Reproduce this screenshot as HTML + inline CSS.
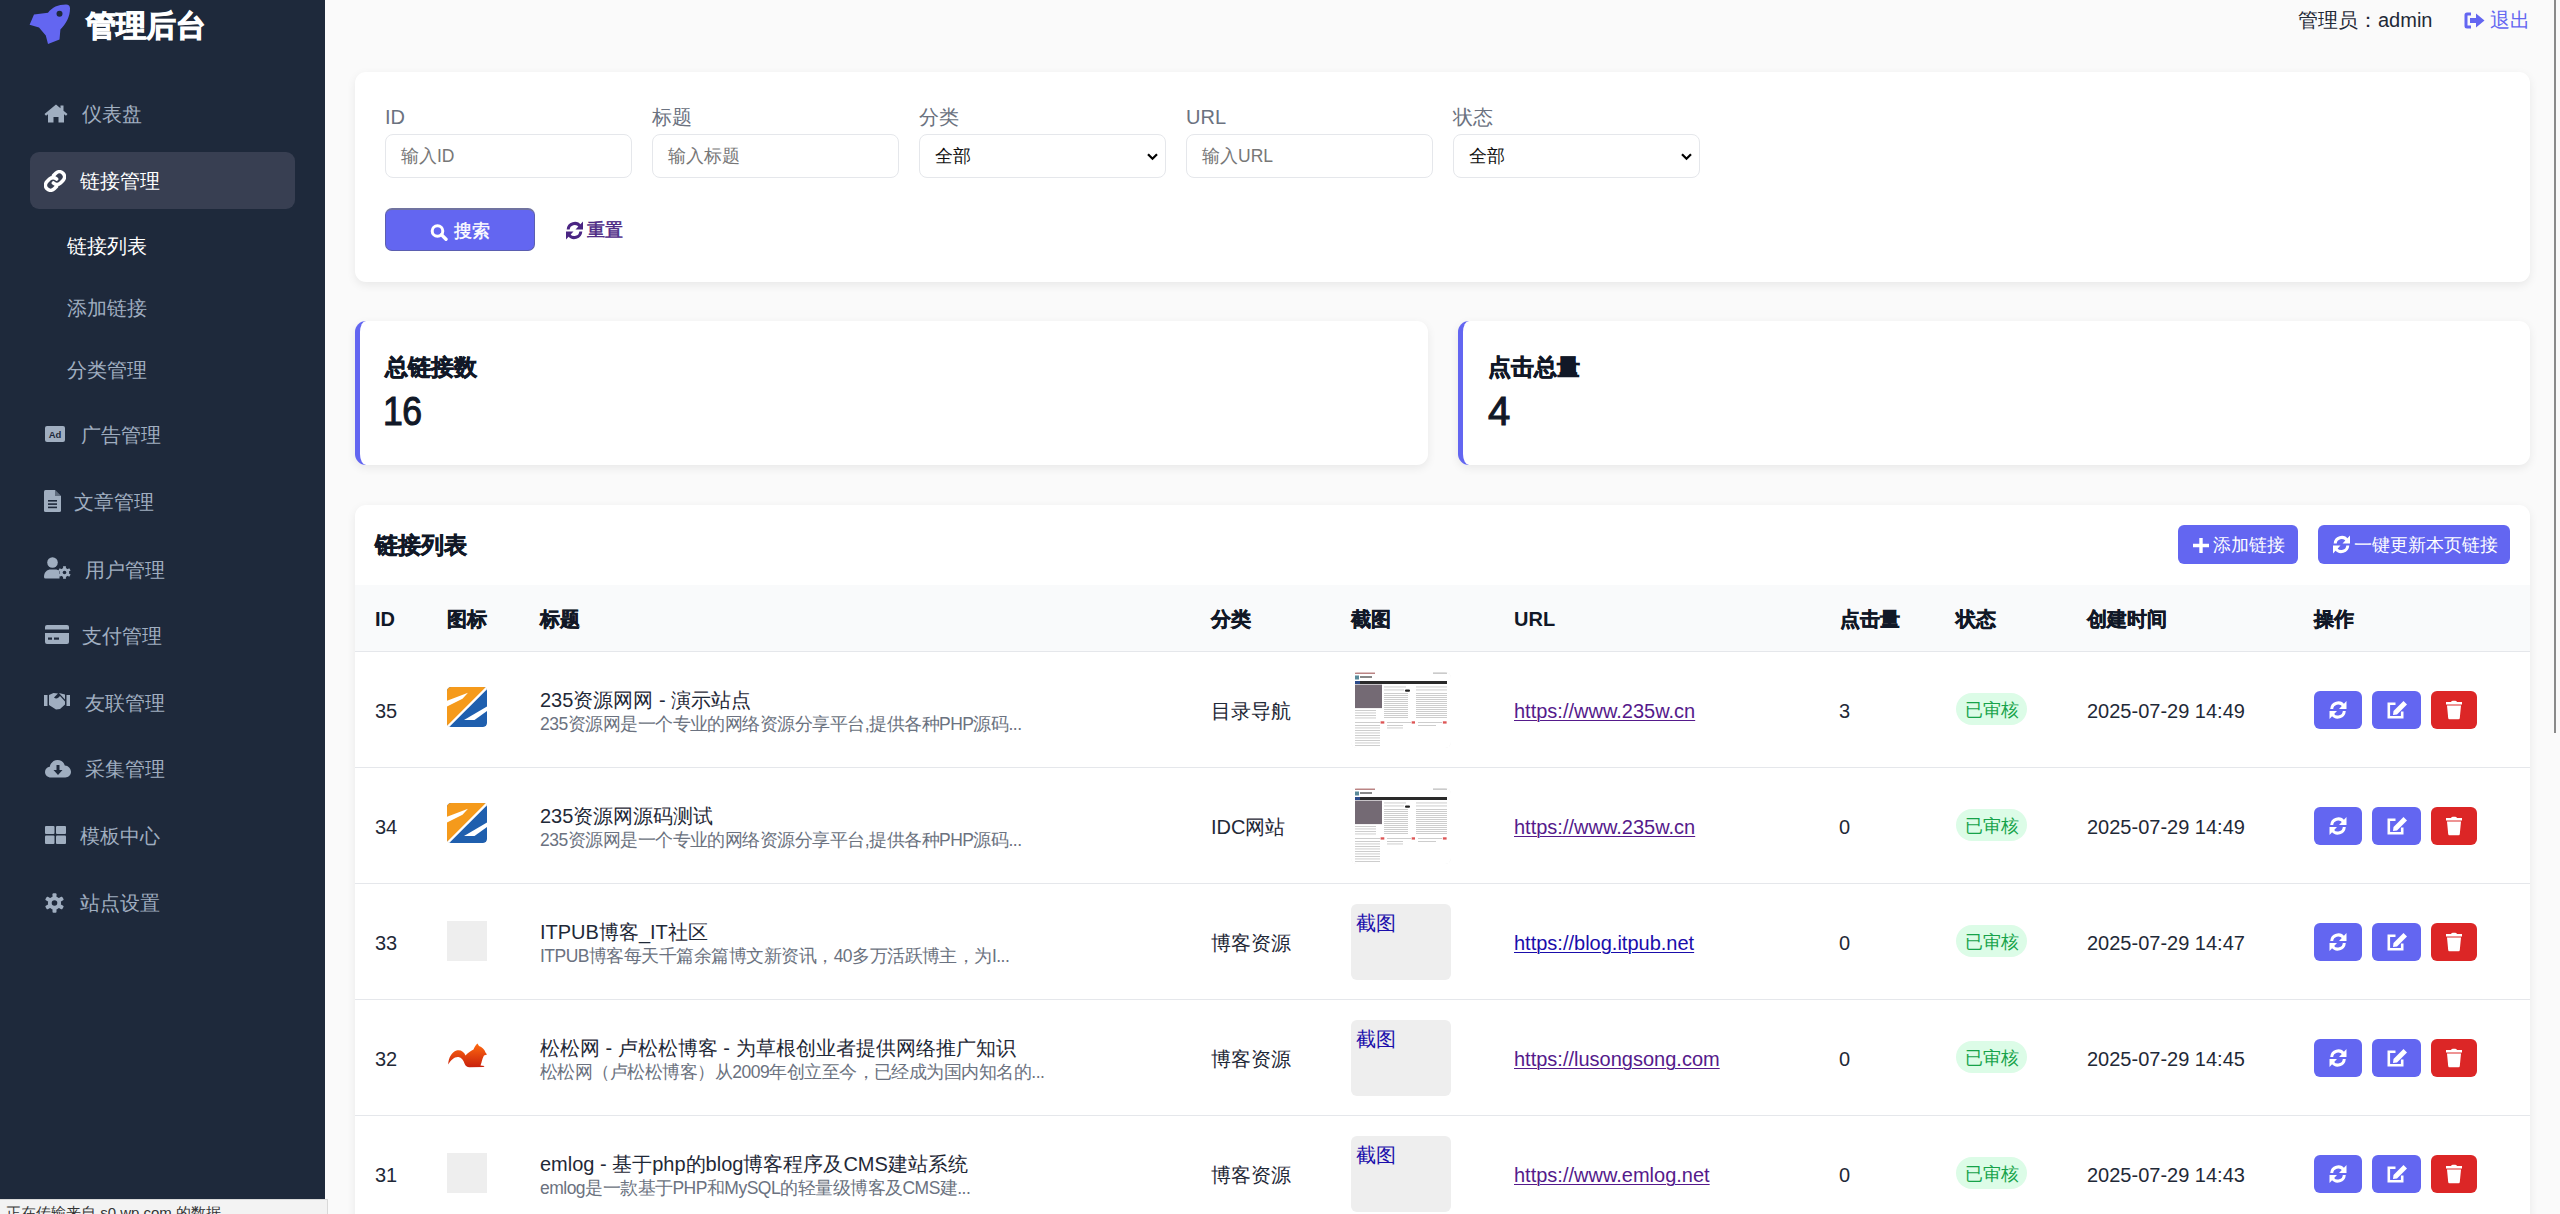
<!DOCTYPE html>
<html><head><meta charset="utf-8">
<style>
*{box-sizing:border-box;margin:0;padding:0}
html,body{width:2560px;height:1214px;overflow:hidden}
body{font-family:"Liberation Sans",sans-serif;background:#fafafa;color:#1f2937;position:relative}
.abs{position:absolute;white-space:nowrap}
svg{position:absolute;display:block}
#side{position:absolute;left:0;top:0;width:325px;height:1214px;background:#1e293b}
.logo{left:86px;top:8px;font-size:30px;font-weight:bold;color:#fff;line-height:36px;-webkit-text-stroke:1px #fff}
.navbg{left:30px;top:152px;width:265px;height:57px;border-radius:9px;background:#383f52}
.nt{font-size:20px;color:#a0aec0;line-height:24px}
.nt.on{color:#fff}
.card{position:absolute;background:#fff;border-radius:11px;box-shadow:0 3px 10px rgba(0,0,0,.075)}
.lbl{font-size:20px;color:#6b7280;line-height:24px;top:-1px}
.inp{position:absolute;top:62px;width:247px;height:44px;border:1px solid #e5e7eb;border-radius:8px;background:#fff}
.ph{position:absolute;left:15px;top:9px;font-size:17.5px;line-height:24px;color:#777;white-space:nowrap}
.sel .ph{color:#111}
.btn{position:absolute;background:#6366f1;border-radius:7px}
.bt{position:absolute;font-size:17.5px;line-height:22px;color:#fff;white-space:nowrap}
.stat-t{font-size:22.5px;font-weight:bold;color:#111827;line-height:28px;-webkit-text-stroke:0.6px #111827}
.stat-n{font-size:40px;font-weight:normal;color:#111827;line-height:48px;-webkit-text-stroke:1.1px #111827;letter-spacing:-0.5px;transform:scaleX(0.89);transform-origin:0 0}
.th{position:absolute;top:22px;font-size:20px;font-weight:bold;color:#111827;line-height:24px;white-space:nowrap;-webkit-text-stroke:0.5px #111827}
.row{position:absolute;left:0;width:2175px;height:116px;border-top:1px solid #e5e7eb}
.td{position:absolute;font-size:20px;line-height:24px;color:#1f2937;white-space:nowrap}
.ds{position:absolute;font-size:17.5px;line-height:22px;color:#6b7280;white-space:nowrap;letter-spacing:-0.52px}
.fav{position:absolute;left:92px;top:35px;width:40px;height:40px;border-radius:4px;background:#eee;overflow:hidden}
.shot{position:absolute;left:996px;top:20px;width:100px;height:76px;border-radius:6px;background:#eee;overflow:hidden}
.shot span{position:absolute;left:5px;top:7px;font-size:20px;line-height:24px;color:#1a0dab}
.url{position:absolute;left:1159px;top:47px;font-size:20px;line-height:24px;color:#551a8b;text-decoration:underline;text-decoration-thickness:1.3px;text-underline-offset:2px;white-space:nowrap}
.badge{position:absolute;left:1601px;top:41px;width:71px;height:32px;border-radius:16px;background:#dcfce7;color:#16a34a;font-size:17.5px;line-height:34px;text-align:center;text-indent:1px}
.ab{position:absolute;top:39px;height:38px;border-radius:6px;background:#6366f1}
.ab svg{left:50%;top:50%;transform:translate(-50%,-50%)}
</style></head><body>
<div id="side">
  <svg style="left:24px;top:0px" width="54" height="52" viewBox="0 0 54 52"><path fill="#6366f1" d="M10,14.5 L24,12.8 C28,7.5 34,4.6 42,4.6 Q46,4.6 46,8.6 C46,17 42,24 36.4,29.5 L35.5,39.4 L24,44.1 L21.8,35.5 L15,27.4 L5.6,24.8 Z"/><circle cx="35.5" cy="13.8" r="3" fill="#1e293b"/></svg>
  <div class="abs logo">管理后台</div>
  <div class="abs navbg"></div>
  <!-- home -->
  <svg style="left:44px;top:104px" width="24" height="19" viewBox="0 0 24 19"><path fill="#a0aec0" d="M12,0.5 L0.5,10 L2,11.8 L4,10.2 L4,18.5 L9.5,18.5 L9.5,13 L14.5,13 L14.5,18.5 L20,18.5 L20,10.2 L22,11.8 L23.5,10 L19.5,6.7 L19.5,1.5 L16.5,1.5 L16.5,4.2 Z"/></svg>
  <div class="abs nt" style="left:82px;top:102px">仪表盘</div>
  <!-- link -->
  <svg style="left:44px;top:170px" width="22" height="22" viewBox="0 0 22 22"><g fill="none" stroke="#fff" stroke-width="3.6" stroke-linecap="round"><path d="M9.5,5.5 L11.8,3.2 C13.8,1.2 17,1.2 19,3.2 C21,5.2 21,8.4 19,10.4 L16.5,12.9 C14.5,14.9 11.4,14.9 9.4,12.9"/><path d="M12.5,16.5 L10.2,18.8 C8.2,20.8 5,20.8 3,18.8 C1,16.8 1,13.6 3,11.6 L5.5,9.1 C7.5,7.1 10.6,7.1 12.6,9.1"/></g></svg>
  <div class="abs nt on" style="left:80px;top:169px">链接管理</div>
  <div class="abs nt on" style="left:67px;top:234px">链接列表</div>
  <div class="abs nt" style="left:67px;top:296px">添加链接</div>
  <div class="abs nt" style="left:67px;top:358px">分类管理</div>
  <!-- ad -->
  <svg style="left:45px;top:426px" width="20" height="16" viewBox="0 0 20 16"><rect x="0" y="0" width="20" height="16" rx="2" fill="#a0aec0"/><text x="10" y="12" font-size="9.5" font-weight="bold" text-anchor="middle" fill="#1e293b" font-family="Liberation Sans">Ad</text></svg>
  <div class="abs nt" style="left:81px;top:423px">广告管理</div>
  <!-- file -->
  <svg style="left:44px;top:490px" width="17" height="22" viewBox="0 0 17 22"><path fill="#a0aec0" d="M0,1.5 Q0,0 1.5,0 L11,0 L17,6 L17,20.5 Q17,22 15.5,22 L1.5,22 Q0,22 0,20.5 Z"/><path fill="#1e293b" d="M11,0 L11,6 L17,6 Z" opacity=".5"/><rect x="4" y="10" width="9" height="1.6" fill="#1e293b"/><rect x="4" y="13.3" width="9" height="1.6" fill="#1e293b"/><rect x="4" y="16.6" width="9" height="1.6" fill="#1e293b"/></svg>
  <div class="abs nt" style="left:74px;top:490px">文章管理</div>
  <!-- user cog -->
  <svg style="left:44px;top:557px" width="27" height="22" viewBox="0 0 27 22"><circle cx="8.5" cy="5.5" r="5.3" fill="#a0aec0"/><path fill="#a0aec0" d="M0,20 C0,15 3,12.5 7,12.5 L11,12.5 C13,12.5 14.5,13 15.5,14 L15.5,21.5 L1.5,21.5 Q0,21.5 0,20 Z"/><g transform="translate(20.5,15.5)"><circle r="4.6" fill="#a0aec0"/><g fill="#a0aec0"><rect x="-1.4" y="-6.3" width="2.8" height="12.6"/><rect x="-1.4" y="-6.3" width="2.8" height="12.6" transform="rotate(60)"/><rect x="-1.4" y="-6.3" width="2.8" height="12.6" transform="rotate(120)"/></g><circle r="1.8" fill="#1e293b"/></g></svg>
  <div class="abs nt" style="left:85px;top:558px">用户管理</div>
  <!-- credit card -->
  <svg style="left:45px;top:625px" width="24" height="19" viewBox="0 0 24 19"><path fill="#a0aec0" d="M0,2 Q0,0 2,0 L22,0 Q24,0 24,2 L24,4.5 L0,4.5 Z M0,8 L24,8 L24,17 Q24,19 22,19 L2,19 Q0,19 0,17 Z"/><rect x="3" y="12.5" width="4" height="2.2" fill="#1e293b"/><rect x="9" y="12.5" width="5" height="2.2" fill="#1e293b"/></svg>
  <div class="abs nt" style="left:82px;top:624px">支付管理</div>
  <!-- handshake -->
  <svg style="left:44px;top:692px" width="26" height="18" viewBox="0 0 26 18"><rect x="0" y="3" width="3.5" height="11" fill="#a0aec0"/><rect x="22.5" y="3" width="3.5" height="11" fill="#a0aec0"/><path fill="#a0aec0" d="M5,3 L9.5,1 L14,1.5 L10,5.5 Q12,7.5 14.5,5.5 L16,4 L21,9.5 L21,12.5 L16,17 L12,17.5 L5,13 Z"/><path fill="#a0aec0" d="M15,1 L21,2.5 L21,7.5 L17,3.2 Z"/></svg>
  <div class="abs nt" style="left:85px;top:691px">友联管理</div>
  <!-- cloud download -->
  <svg style="left:45px;top:760px" width="26" height="18" viewBox="0 0 26 18"><path fill="#a0aec0" d="M6,17.5 C2.5,17.5 0,15 0,12 C0,9.2 2,7 4.8,6.7 C5.5,3 8.6,0 12.5,0 C16,0 18.8,2.3 19.8,5.4 C23.2,5.6 26,8.4 26,11.8 C26,14.9 23.5,17.5 20.3,17.5 Z"/><path fill="#1e293b" d="M11.5,5 L14.5,5 L14.5,10 L17.5,10 L13,15 L8.5,10 L11.5,10 Z"/></svg>
  <div class="abs nt" style="left:85px;top:757px">采集管理</div>
  <!-- th-large -->
  <svg style="left:45px;top:826px" width="21" height="18" viewBox="0 0 21 18"><g fill="#a0aec0"><rect x="0" y="0" width="9.5" height="8" rx="1"/><rect x="11" y="0" width="10" height="8" rx="1"/><rect x="0" y="9.5" width="9.5" height="8.5" rx="1"/><rect x="11" y="9.5" width="10" height="8.5" rx="1"/></g></svg>
  <div class="abs nt" style="left:80px;top:824px">模板中心</div>
  <!-- cog -->
  <svg style="left:45px;top:893px" width="19" height="20" viewBox="-9.5 -10 19 20"><g fill="#a0aec0"><circle r="6.6"/><g><rect x="-2" y="-9.8" width="4" height="19.6" rx="1"/><rect x="-2" y="-9.8" width="4" height="19.6" rx="1" transform="rotate(60)"/><rect x="-2" y="-9.8" width="4" height="19.6" rx="1" transform="rotate(120)"/></g></g><circle r="2.8" fill="#1e293b"/></svg>
  <div class="abs nt" style="left:80px;top:891px">站点设置</div>
</div>

<!-- header -->
<div class="abs" style="left:2298px;top:8px;font-size:20px;line-height:24px;color:#1f2937">管理员：admin</div>
<svg style="left:2464px;top:12px" width="21" height="17" viewBox="0 0 21 17"><path fill="#6366f1" d="M7,0.5 L3,0.5 Q0.5,0.5 0.5,3 L0.5,14 Q0.5,16.5 3,16.5 L7,16.5 L7,13.5 L3.5,13.5 L3.5,3.5 L7,3.5 Z M12,1.5 L20.5,8.5 L12,15.5 L12,11 L6,11 L6,6 L12,6 Z"/></svg>
<div class="abs" style="left:2490px;top:8px;font-size:20px;line-height:24px;color:#6366f1">退出</div>

<div class="card" style="left:355px;top:72px;width:2175px;height:210px">
  <div class="abs lbl" style="left:30px;top:33px">ID</div>
  <div class="abs lbl" style="left:297px;top:33px">标题</div>
  <div class="abs lbl" style="left:564px;top:33px">分类</div>
  <div class="abs lbl" style="left:831px;top:33px">URL</div>
  <div class="abs lbl" style="left:1098px;top:33px">状态</div>
  <div class="inp" style="left:30px"><span class="ph">输入ID</span></div>
  <div class="inp" style="left:297px"><span class="ph">输入标题</span></div>
  <div class="inp sel" style="left:564px"><span class="ph">全部</span><svg style="left:227px;top:18px" width="11" height="8" viewBox="0 0 11 8"><path d="M1,1.2 L5.5,5.8 L10,1.2" fill="none" stroke="#000" stroke-width="2.2"/></svg></div>
  <div class="inp" style="left:831px"><span class="ph">输入URL</span></div>
  <div class="inp sel" style="left:1098px"><span class="ph">全部</span><svg style="left:227px;top:18px" width="11" height="8" viewBox="0 0 11 8"><path d="M1,1.2 L5.5,5.8 L10,1.2" fill="none" stroke="#000" stroke-width="2.2"/></svg></div>
  <div class="btn" style="left:30px;top:136px;width:150px;height:43px;border:1px solid #5b5eb0;border-top:2px solid #7073a0">
    <svg style="left:44px;top:14px" width="20" height="17" viewBox="0 0 20 17"><circle cx="7.5" cy="7" r="5.3" fill="none" stroke="#fff" stroke-width="3"/><path d="M11.5,10.8 L16,15.2" stroke="#fff" stroke-width="3.4" stroke-linecap="round"/></svg>
    <span class="bt" style="left:68px;top:10px;-webkit-text-stroke:0.4px #fff">搜索</span>
  </div>
  <svg style="left:210px;top:149px" width="19" height="19" viewBox="0 0 19 19"><g fill="none" stroke="#4a2583" stroke-width="3"><path d="M3.2,8.5 A6.5,6.5 0 0 1 15,5.2"/><path d="M15.8,10.5 A6.5,6.5 0 0 1 4,13.8"/></g><path fill="#4a2583" d="M18,0.5 L18,8.5 L10.5,8.5 Z M1,18.5 L1,10.5 L8.5,10.5 Z"/></svg>
  <span class="abs" style="left:232px;top:147px;font-size:17.5px;line-height:22px;color:#4a2583;-webkit-text-stroke:0.5px #4a2583">重置</span>
</div>

<div class="card" style="left:355px;top:321px;width:1073px;height:144px;border-left:5px solid #6366f1">
  <div class="abs stat-t" style="left:25px;top:33px">总链接数</div>
  <div class="abs stat-n" style="left:23px;top:66px">16</div>
</div>
<div class="card" style="left:1458px;top:321px;width:1072px;height:144px;border-left:5px solid #6366f1">
  <div class="abs stat-t" style="left:25px;top:33px">点击总量</div>
  <div class="abs stat-n" style="left:25px;top:66px;transform:none">4</div>
</div>

<div class="card" style="left:355px;top:505px;width:2175px;height:760px;overflow:hidden">
<div class="abs" style="left:20px;top:27px;font-size:22.5px;font-weight:bold;color:#111827;line-height:28px;-webkit-text-stroke:0.6px #111827">链接列表</div>
<div class="btn" style="left:1823px;top:20px;width:120px;height:39px;border-radius:6px"><svg style="left:15px;top:13px" width="16" height="15" viewBox="0 0 16 15"><path fill="#fff" d="M6.3,0 L9.7,0 L9.7,5.8 L16,5.8 L16,9.2 L9.7,9.2 L9.7,15 L6.3,15 L6.3,9.2 L0,9.2 L0,5.8 L6.3,5.8 Z"/></svg><span class="bt" style="left:35px;top:9px">添加链接</span></div>
<div class="btn" style="left:1963px;top:20px;width:192px;height:39px;border-radius:6px"><svg style="left:14px;top:10px" width="19" height="19" viewBox="0 0 19 19"><g fill="none" stroke="#fff" stroke-width="3"><path d="M3.2,8.5 A6.5,6.5 0 0 1 15,5.2"/><path d="M15.8,10.5 A6.5,6.5 0 0 1 4,13.8"/></g><path fill="#fff" d="M18,0.5 L18,8.5 L10.5,8.5 Z M1,18.5 L1,10.5 L8.5,10.5 Z"/></svg><span class="bt" style="left:36px;top:9px">一键更新本页链接</span></div>
<div style="position:absolute;left:0;top:80px;width:2175px;height:66px;background:#f9fafb">
<div class="th" style="left:20px;-webkit-text-stroke:0">ID</div><div class="th" style="left:92px">图标</div><div class="th" style="left:185px">标题</div><div class="th" style="left:856px">分类</div><div class="th" style="left:996px">截图</div><div class="th" style="left:1159px;-webkit-text-stroke:0">URL</div><div class="th" style="left:1485px">点击量</div><div class="th" style="left:1601px">状态</div><div class="th" style="left:1732px">创建时间</div><div class="th" style="left:1959px">操作</div>
</div>
<div class="row" style="top:146px">
<div class="td" style="left:20px;top:47px">35</div>
<div class="fav" style="background:none"><svg width="40" height="40" viewBox="0 0 40 40" style="left:0;top:0"><rect width="40" height="40" rx="4" fill="#1f5fae"/><path d="M4,0 L40,0 L0,40 L0,4 Q0,0 4,0 Z" fill="#f59a1b"/><path d="M1,39.5 L39.5,1" stroke="#fff" stroke-width="2.4"/><path d="M0,13.8 L21,5.8 L15.5,11.8 L0,19.5 Z" fill="#fff"/><path d="M17,33 L40,19.5 L40,24 L27.5,33 Z" fill="#fff"/></svg></div>
<div class="td" style="left:185px;top:36px">235资源网网 - 演示站点</div>
<div class="ds" style="left:185px;top:61px">235资源网是一个专业的网络资源分享平台,提供各种PHP源码...</div>
<div class="td" style="left:856px;top:47px">目录导航</div>
<div class="shot"><svg width="100" height="76" viewBox="0 0 100 76" style="left:0;top:0"><rect width="100" height="76" fill="#fff"/><rect x="4" y="0.6" width="20" height="1.2" fill="#a66"/><rect x="82" y="0.6" width="14" height="1" fill="#aaa"/><rect x="4" y="3.5" width="4" height="4" fill="#5a8a9a"/><rect x="9" y="4" width="12" height="2" fill="#888"/><rect x="4" y="9" width="92" height="3" fill="#2a2a2a"/><rect x="4" y="9" width="5" height="3" fill="#2b4a8a"/><rect x="4" y="12.6" width="27" height="23.5" fill="#746a74"/><g fill="#c8c8c8"><rect x="33" y="14.5" width="22" height="0.9"/><rect x="33" y="17.5" width="20" height="0.9"/><rect x="33" y="21" width="24" height="0.9"/><rect x="33" y="23" width="24" height="0.9"/><rect x="33" y="25" width="24" height="0.9"/><rect x="33" y="27" width="24" height="0.9"/><rect x="33" y="29" width="24" height="0.9"/><rect x="33" y="31" width="24" height="0.9"/><rect x="33" y="33" width="24" height="0.9"/><rect x="33" y="35" width="24" height="0.9"/><rect x="33" y="37" width="24" height="0.9"/><rect x="33" y="39" width="24" height="0.9"/><rect x="33" y="41" width="24" height="0.9"/><rect x="33" y="43" width="24" height="0.9"/><rect x="33" y="45" width="24" height="0.9"/><rect x="65" y="14.5" width="31" height="0.9"/><rect x="65" y="17.5" width="31" height="0.9"/><rect x="65" y="21" width="31" height="0.9"/><rect x="65" y="23" width="31" height="0.9"/><rect x="65" y="25" width="31" height="0.9"/><rect x="65" y="27" width="31" height="0.9"/><rect x="65" y="29" width="31" height="0.9"/><rect x="65" y="31" width="31" height="0.9"/><rect x="65" y="33" width="31" height="0.9"/><rect x="65" y="35" width="31" height="0.9"/><rect x="65" y="37" width="31" height="0.9"/><rect x="65" y="39" width="31" height="0.9"/><rect x="65" y="41" width="31" height="0.9"/><rect x="65" y="43" width="31" height="0.9"/><rect x="65" y="45" width="31" height="0.9"/><rect x="4" y="38" width="21" height="0.9"/><rect x="4" y="40.5" width="21" height="0.9"/><rect x="4" y="43" width="21" height="0.9"/><rect x="4" y="45.5" width="21" height="0.9"/><rect x="4" y="50" width="25" height="0.9"/><rect x="36" y="50" width="24" height="0.9"/><rect x="67" y="50" width="24" height="0.9"/><rect x="4" y="53" width="25" height="0.9"/><rect x="4" y="55.5" width="25" height="0.9"/><rect x="4" y="58" width="25" height="0.9"/><rect x="4" y="60.5" width="25" height="0.9"/><rect x="4" y="63" width="25" height="0.9"/><rect x="4" y="65.5" width="25" height="0.9"/><rect x="4" y="68" width="25" height="0.9"/><rect x="4" y="70.5" width="25" height="0.9"/><rect x="4" y="73" width="25" height="0.9"/><rect x="36" y="53" width="16" height="0.9"/><rect x="36" y="55.5" width="16" height="0.9"/><rect x="67" y="53" width="18" height="0.9"/></g><g fill="#d55"><rect x="29.6" y="49.3" width="3.7" height="2.3"/><rect x="60.7" y="49.3" width="3.3" height="2.3"/><rect x="91.9" y="49.3" width="3.7" height="2.3"/></g><rect x="54" y="17.5" width="5" height="2.2" rx="1" fill="#222"/></svg></div>
<div class="url" style="color:#551a8b">https://www.235w.cn</div>
<div class="td" style="left:1484px;top:47px">3</div>
<div class="badge">已审核</div>
<div class="td" style="left:1732px;top:47px">2025-07-29 14:49</div>
<div class="ab" style="left:1959px;width:48px"><svg width="19" height="19" viewBox="0 0 19 19"><g fill="none" stroke="#fff" stroke-width="3"><path d="M3.2,8.5 A6.5,6.5 0 0 1 15,5.2"/><path d="M15.8,10.5 A6.5,6.5 0 0 1 4,13.8"/></g><path fill="#fff" d="M18,0.5 L18,8.5 L10.5,8.5 Z M1,18.5 L1,10.5 L8.5,10.5 Z"/></svg></div>
<div class="ab" style="left:2017px;width:49px"><svg width="21" height="19" viewBox="0 0 21 19"><path fill="none" stroke="#fff" stroke-width="2.6" d="M9,3.3 L2.3,3.3 L2.3,16.7 L15.7,16.7 L15.7,11"/><path fill="#fff" d="M17,0.5 L20.5,4 L10.5,14 L6.5,14.5 L7,10.5 Z"/></svg></div>
<div class="ab" style="left:2076px;width:46px;background:#dc2626"><svg width="17" height="19" viewBox="0 0 17 19"><path fill="#fff" d="M5.5,1.5 Q6,0 7.5,0 L9.5,0 Q11,0 11.5,1.5 L16.5,1.5 L16.5,4 L0.5,4 L0.5,1.5 Z M1.5,5 L15.5,5 L14.3,17.5 Q14.2,19 12.7,19 L4.3,19 Q2.8,19 2.7,17.5 Z"/></svg></div>
</div>
<div class="row" style="top:262px">
<div class="td" style="left:20px;top:47px">34</div>
<div class="fav" style="background:none"><svg width="40" height="40" viewBox="0 0 40 40" style="left:0;top:0"><rect width="40" height="40" rx="4" fill="#1f5fae"/><path d="M4,0 L40,0 L0,40 L0,4 Q0,0 4,0 Z" fill="#f59a1b"/><path d="M1,39.5 L39.5,1" stroke="#fff" stroke-width="2.4"/><path d="M0,13.8 L21,5.8 L15.5,11.8 L0,19.5 Z" fill="#fff"/><path d="M17,33 L40,19.5 L40,24 L27.5,33 Z" fill="#fff"/></svg></div>
<div class="td" style="left:185px;top:36px">235资源网源码测试</div>
<div class="ds" style="left:185px;top:61px">235资源网是一个专业的网络资源分享平台,提供各种PHP源码...</div>
<div class="td" style="left:856px;top:47px">IDC网站</div>
<div class="shot"><svg width="100" height="76" viewBox="0 0 100 76" style="left:0;top:0"><rect width="100" height="76" fill="#fff"/><rect x="4" y="0.6" width="20" height="1.2" fill="#a66"/><rect x="82" y="0.6" width="14" height="1" fill="#aaa"/><rect x="4" y="3.5" width="4" height="4" fill="#5a8a9a"/><rect x="9" y="4" width="12" height="2" fill="#888"/><rect x="4" y="9" width="92" height="3" fill="#2a2a2a"/><rect x="4" y="9" width="5" height="3" fill="#2b4a8a"/><rect x="4" y="12.6" width="27" height="23.5" fill="#746a74"/><g fill="#c8c8c8"><rect x="33" y="14.5" width="22" height="0.9"/><rect x="33" y="17.5" width="20" height="0.9"/><rect x="33" y="21" width="24" height="0.9"/><rect x="33" y="23" width="24" height="0.9"/><rect x="33" y="25" width="24" height="0.9"/><rect x="33" y="27" width="24" height="0.9"/><rect x="33" y="29" width="24" height="0.9"/><rect x="33" y="31" width="24" height="0.9"/><rect x="33" y="33" width="24" height="0.9"/><rect x="33" y="35" width="24" height="0.9"/><rect x="33" y="37" width="24" height="0.9"/><rect x="33" y="39" width="24" height="0.9"/><rect x="33" y="41" width="24" height="0.9"/><rect x="33" y="43" width="24" height="0.9"/><rect x="33" y="45" width="24" height="0.9"/><rect x="65" y="14.5" width="31" height="0.9"/><rect x="65" y="17.5" width="31" height="0.9"/><rect x="65" y="21" width="31" height="0.9"/><rect x="65" y="23" width="31" height="0.9"/><rect x="65" y="25" width="31" height="0.9"/><rect x="65" y="27" width="31" height="0.9"/><rect x="65" y="29" width="31" height="0.9"/><rect x="65" y="31" width="31" height="0.9"/><rect x="65" y="33" width="31" height="0.9"/><rect x="65" y="35" width="31" height="0.9"/><rect x="65" y="37" width="31" height="0.9"/><rect x="65" y="39" width="31" height="0.9"/><rect x="65" y="41" width="31" height="0.9"/><rect x="65" y="43" width="31" height="0.9"/><rect x="65" y="45" width="31" height="0.9"/><rect x="4" y="38" width="21" height="0.9"/><rect x="4" y="40.5" width="21" height="0.9"/><rect x="4" y="43" width="21" height="0.9"/><rect x="4" y="45.5" width="21" height="0.9"/><rect x="4" y="50" width="25" height="0.9"/><rect x="36" y="50" width="24" height="0.9"/><rect x="67" y="50" width="24" height="0.9"/><rect x="4" y="53" width="25" height="0.9"/><rect x="4" y="55.5" width="25" height="0.9"/><rect x="4" y="58" width="25" height="0.9"/><rect x="4" y="60.5" width="25" height="0.9"/><rect x="4" y="63" width="25" height="0.9"/><rect x="4" y="65.5" width="25" height="0.9"/><rect x="4" y="68" width="25" height="0.9"/><rect x="4" y="70.5" width="25" height="0.9"/><rect x="4" y="73" width="25" height="0.9"/><rect x="36" y="53" width="16" height="0.9"/><rect x="36" y="55.5" width="16" height="0.9"/><rect x="67" y="53" width="18" height="0.9"/></g><g fill="#d55"><rect x="29.6" y="49.3" width="3.7" height="2.3"/><rect x="60.7" y="49.3" width="3.3" height="2.3"/><rect x="91.9" y="49.3" width="3.7" height="2.3"/></g><rect x="54" y="17.5" width="5" height="2.2" rx="1" fill="#222"/></svg></div>
<div class="url" style="color:#551a8b">https://www.235w.cn</div>
<div class="td" style="left:1484px;top:47px">0</div>
<div class="badge">已审核</div>
<div class="td" style="left:1732px;top:47px">2025-07-29 14:49</div>
<div class="ab" style="left:1959px;width:48px"><svg width="19" height="19" viewBox="0 0 19 19"><g fill="none" stroke="#fff" stroke-width="3"><path d="M3.2,8.5 A6.5,6.5 0 0 1 15,5.2"/><path d="M15.8,10.5 A6.5,6.5 0 0 1 4,13.8"/></g><path fill="#fff" d="M18,0.5 L18,8.5 L10.5,8.5 Z M1,18.5 L1,10.5 L8.5,10.5 Z"/></svg></div>
<div class="ab" style="left:2017px;width:49px"><svg width="21" height="19" viewBox="0 0 21 19"><path fill="none" stroke="#fff" stroke-width="2.6" d="M9,3.3 L2.3,3.3 L2.3,16.7 L15.7,16.7 L15.7,11"/><path fill="#fff" d="M17,0.5 L20.5,4 L10.5,14 L6.5,14.5 L7,10.5 Z"/></svg></div>
<div class="ab" style="left:2076px;width:46px;background:#dc2626"><svg width="17" height="19" viewBox="0 0 17 19"><path fill="#fff" d="M5.5,1.5 Q6,0 7.5,0 L9.5,0 Q11,0 11.5,1.5 L16.5,1.5 L16.5,4 L0.5,4 L0.5,1.5 Z M1.5,5 L15.5,5 L14.3,17.5 Q14.2,19 12.7,19 L4.3,19 Q2.8,19 2.7,17.5 Z"/></svg></div>
</div>
<div class="row" style="top:378px">
<div class="td" style="left:20px;top:47px">33</div>
<div class="fav" style="top:37px;border-radius:0"></div>
<div class="td" style="left:185px;top:36px">ITPUB博客_IT社区</div>
<div class="ds" style="left:185px;top:61px">ITPUB博客每天千篇余篇博文新资讯，40多万活跃博主，为I...</div>
<div class="td" style="left:856px;top:47px">博客资源</div>
<div class="shot"><span>截图</span></div>
<div class="url" style="color:#1a0dab">https://blog.itpub.net</div>
<div class="td" style="left:1484px;top:47px">0</div>
<div class="badge">已审核</div>
<div class="td" style="left:1732px;top:47px">2025-07-29 14:47</div>
<div class="ab" style="left:1959px;width:48px"><svg width="19" height="19" viewBox="0 0 19 19"><g fill="none" stroke="#fff" stroke-width="3"><path d="M3.2,8.5 A6.5,6.5 0 0 1 15,5.2"/><path d="M15.8,10.5 A6.5,6.5 0 0 1 4,13.8"/></g><path fill="#fff" d="M18,0.5 L18,8.5 L10.5,8.5 Z M1,18.5 L1,10.5 L8.5,10.5 Z"/></svg></div>
<div class="ab" style="left:2017px;width:49px"><svg width="21" height="19" viewBox="0 0 21 19"><path fill="none" stroke="#fff" stroke-width="2.6" d="M9,3.3 L2.3,3.3 L2.3,16.7 L15.7,16.7 L15.7,11"/><path fill="#fff" d="M17,0.5 L20.5,4 L10.5,14 L6.5,14.5 L7,10.5 Z"/></svg></div>
<div class="ab" style="left:2076px;width:46px;background:#dc2626"><svg width="17" height="19" viewBox="0 0 17 19"><path fill="#fff" d="M5.5,1.5 Q6,0 7.5,0 L9.5,0 Q11,0 11.5,1.5 L16.5,1.5 L16.5,4 L0.5,4 L0.5,1.5 Z M1.5,5 L15.5,5 L14.3,17.5 Q14.2,19 12.7,19 L4.3,19 Q2.8,19 2.7,17.5 Z"/></svg></div>
</div>
<div class="row" style="top:494px">
<div class="td" style="left:20px;top:47px">32</div>
<div class="fav" style="background:none"><svg width="40" height="40" viewBox="0 0 40 40" style="left:0;top:0"><defs><linearGradient id="sqg" x1="0" y1="0" x2="0" y2="1"><stop offset="0" stop-color="#ff6a10"/><stop offset="1" stop-color="#c8200c"/></linearGradient></defs><path fill="url(#sqg)" d="M1.2,29.5 C1.5,23 4.5,17 9.5,15.5 C13.5,14.5 17,16.5 18.5,20.5 C20.5,18 23.5,16 26.5,14.5 C27.5,12 28.5,10 30.5,8.5 L32,11 C35,12 37.5,14.5 38.5,17.5 L40,19.5 L37,20.5 C36,22.5 35,25 34.5,27.5 L33.5,30.5 L37.5,31 L36.5,32 L22.5,32.3 C20,32.3 18.5,31 17.5,28.5 C16.5,25.5 14.5,22.5 11.5,22 C7.5,21.5 4,25 1.2,29.5 Z"/></svg></div>
<div class="td" style="left:185px;top:36px">松松网 - 卢松松博客 - 为草根创业者提供网络推广知识</div>
<div class="ds" style="left:185px;top:61px">松松网（卢松松博客）从2009年创立至今，已经成为国内知名的...</div>
<div class="td" style="left:856px;top:47px">博客资源</div>
<div class="shot"><span>截图</span></div>
<div class="url" style="color:#551a8b">https://lusongsong.com</div>
<div class="td" style="left:1484px;top:47px">0</div>
<div class="badge">已审核</div>
<div class="td" style="left:1732px;top:47px">2025-07-29 14:45</div>
<div class="ab" style="left:1959px;width:48px"><svg width="19" height="19" viewBox="0 0 19 19"><g fill="none" stroke="#fff" stroke-width="3"><path d="M3.2,8.5 A6.5,6.5 0 0 1 15,5.2"/><path d="M15.8,10.5 A6.5,6.5 0 0 1 4,13.8"/></g><path fill="#fff" d="M18,0.5 L18,8.5 L10.5,8.5 Z M1,18.5 L1,10.5 L8.5,10.5 Z"/></svg></div>
<div class="ab" style="left:2017px;width:49px"><svg width="21" height="19" viewBox="0 0 21 19"><path fill="none" stroke="#fff" stroke-width="2.6" d="M9,3.3 L2.3,3.3 L2.3,16.7 L15.7,16.7 L15.7,11"/><path fill="#fff" d="M17,0.5 L20.5,4 L10.5,14 L6.5,14.5 L7,10.5 Z"/></svg></div>
<div class="ab" style="left:2076px;width:46px;background:#dc2626"><svg width="17" height="19" viewBox="0 0 17 19"><path fill="#fff" d="M5.5,1.5 Q6,0 7.5,0 L9.5,0 Q11,0 11.5,1.5 L16.5,1.5 L16.5,4 L0.5,4 L0.5,1.5 Z M1.5,5 L15.5,5 L14.3,17.5 Q14.2,19 12.7,19 L4.3,19 Q2.8,19 2.7,17.5 Z"/></svg></div>
</div>
<div class="row" style="top:610px">
<div class="td" style="left:20px;top:47px">31</div>
<div class="fav" style="top:37px;border-radius:0"></div>
<div class="td" style="left:185px;top:36px">emlog - 基于php的blog博客程序及CMS建站系统</div>
<div class="ds" style="left:185px;top:61px">emlog是一款基于PHP和MySQL的轻量级博客及CMS建...</div>
<div class="td" style="left:856px;top:47px">博客资源</div>
<div class="shot"><span>截图</span></div>
<div class="url" style="color:#551a8b">https://www.emlog.net</div>
<div class="td" style="left:1484px;top:47px">0</div>
<div class="badge">已审核</div>
<div class="td" style="left:1732px;top:47px">2025-07-29 14:43</div>
<div class="ab" style="left:1959px;width:48px"><svg width="19" height="19" viewBox="0 0 19 19"><g fill="none" stroke="#fff" stroke-width="3"><path d="M3.2,8.5 A6.5,6.5 0 0 1 15,5.2"/><path d="M15.8,10.5 A6.5,6.5 0 0 1 4,13.8"/></g><path fill="#fff" d="M18,0.5 L18,8.5 L10.5,8.5 Z M1,18.5 L1,10.5 L8.5,10.5 Z"/></svg></div>
<div class="ab" style="left:2017px;width:49px"><svg width="21" height="19" viewBox="0 0 21 19"><path fill="none" stroke="#fff" stroke-width="2.6" d="M9,3.3 L2.3,3.3 L2.3,16.7 L15.7,16.7 L15.7,11"/><path fill="#fff" d="M17,0.5 L20.5,4 L10.5,14 L6.5,14.5 L7,10.5 Z"/></svg></div>
<div class="ab" style="left:2076px;width:46px;background:#dc2626"><svg width="17" height="19" viewBox="0 0 17 19"><path fill="#fff" d="M5.5,1.5 Q6,0 7.5,0 L9.5,0 Q11,0 11.5,1.5 L16.5,1.5 L16.5,4 L0.5,4 L0.5,1.5 Z M1.5,5 L15.5,5 L14.3,17.5 Q14.2,19 12.7,19 L4.3,19 Q2.8,19 2.7,17.5 Z"/></svg></div>
</div>
</div>

<div class="abs" style="left:0;top:1199px;width:328px;height:15px;background:#f3f3f3;border-top:1px solid #d9d9d9;border-right:1px solid #d9d9d9"></div>
<div class="abs" style="left:6px;top:1204px;font-size:15px;line-height:18px;color:#333">正在传输来自 s0.wp.com 的数据...</div>
<div class="abs" style="left:2554px;top:0;width:2px;height:733px;background:#8a8a8a"></div>
</body></html>
